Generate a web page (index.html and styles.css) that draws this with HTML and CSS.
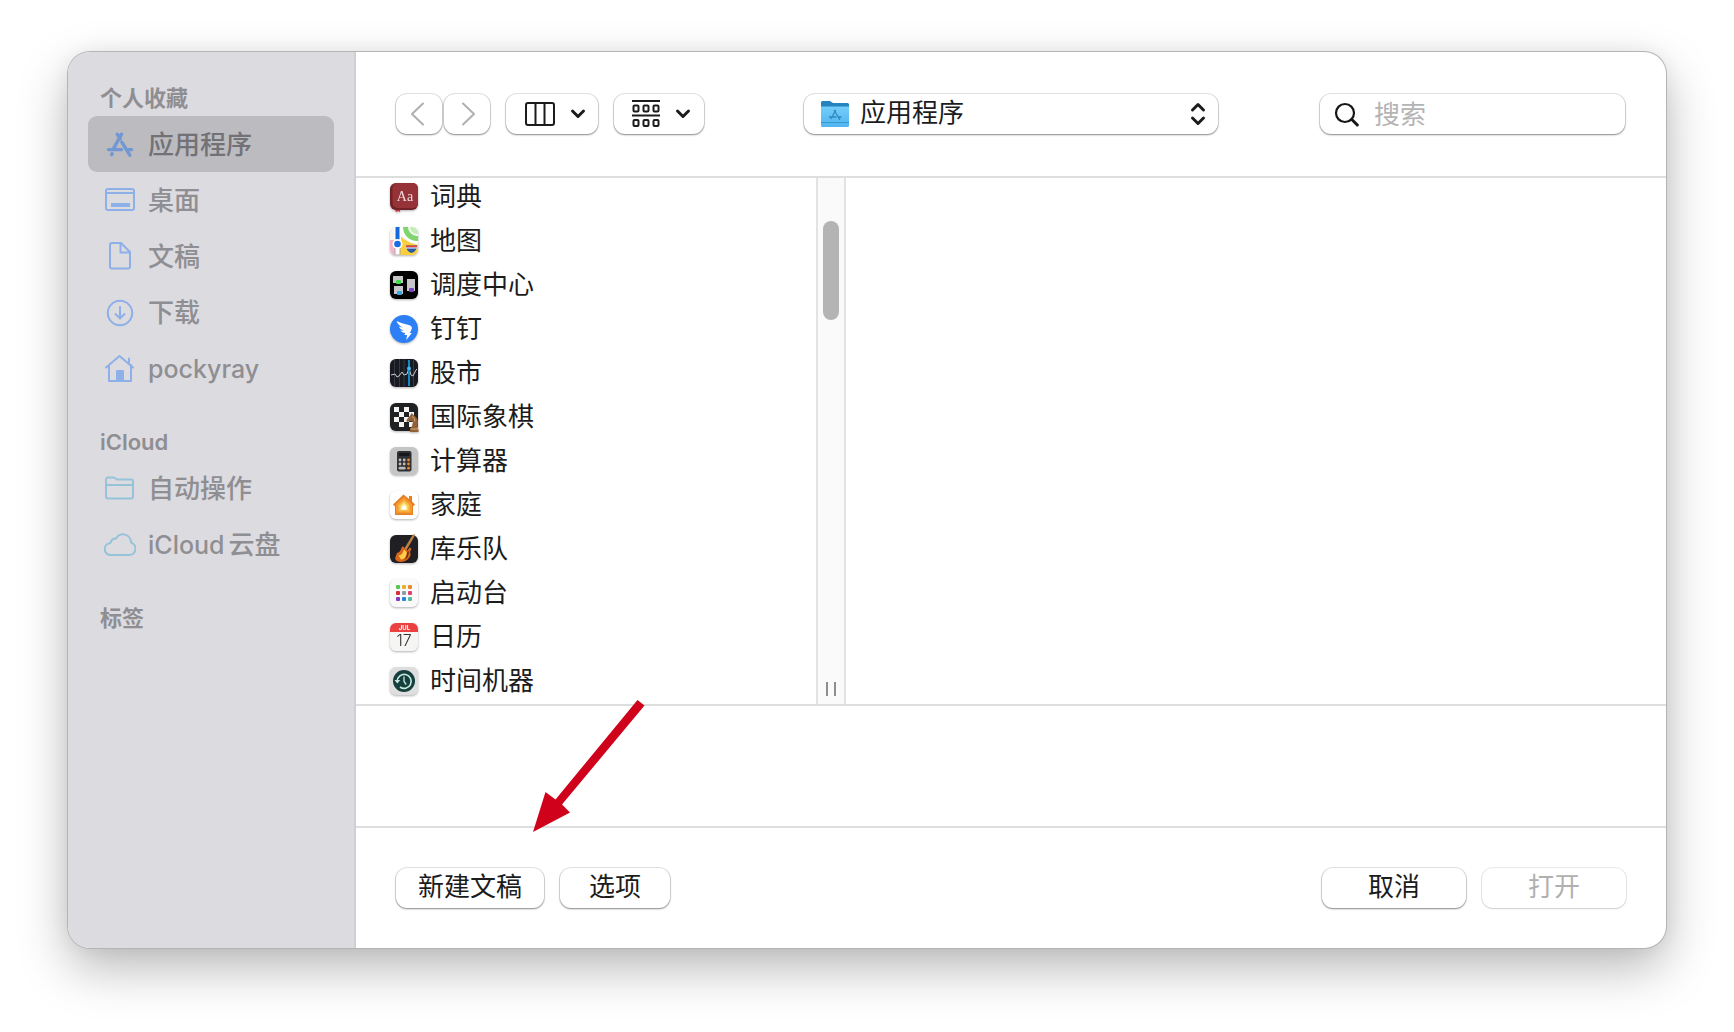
FILE: index.html
```html
<!DOCTYPE html>
<html lang="zh-CN">
<head>
<meta charset="utf-8">
<title>打开</title>
<link rel="stylesheet" href="styles.css">
</head>
<body>
<div class="dialog" role="dialog" aria-label="打开">
  <nav class="sidebar">
    <h2 class="side-heading">个人收藏</h2>
    <a class="side-item selected" href="#apps">
      <svg class="side-icon" viewBox="0 0 32 32" fill="none" stroke="currentColor" stroke-width="3.4" stroke-linecap="round"><path d="M17.6 6.2 9.6 20.3M13.3 6.2l3 4.6M17.8 14.2l8 13M4.5 21.6h13.2M23.6 21.6h4M7.6 26.6l.5-.9"/></svg>
      <span class="side-label">应用程序</span>
    </a>
    <a class="side-item" href="#desktop">
      <svg class="side-icon" viewBox="0 0 32 32" fill="none" stroke="currentColor" stroke-width="2"><rect x="2" y="5" width="28" height="21" rx="2"/><path d="M2 9h28"/><path d="M7 21h19" stroke-width="4"/></svg>
      <span class="side-label">桌面</span>
    </a>
    <a class="side-item" href="#documents">
      <svg class="side-icon" viewBox="0 0 32 32" fill="none" stroke="currentColor" stroke-width="2" stroke-linejoin="round"><path d="M8.500 3H17l9 9v14.500a2 2 0 0 1-2 2H8a2 2 0 0 1-2-2V5a2 2 0 0 1 2-2zM16.500 3v9.500H26"/></svg>
      <span class="side-label">文稿</span>
    </a>
    <a class="side-item" href="#downloads">
      <svg class="side-icon" viewBox="0 0 32 32" fill="none" stroke="currentColor" stroke-width="2" stroke-linecap="round" stroke-linejoin="round"><circle cx="16" cy="17" r="12.200"/><path d="M16 11v11M11.500 18l4.500 4.500 4.500-4.500"/></svg>
      <span class="side-label">下载</span>
    </a>
    <a class="side-item" href="#home">
      <svg class="side-icon" viewBox="0 0 32 32" fill="none" stroke="currentColor" stroke-width="2" stroke-linecap="round" stroke-linejoin="round"><path d="M2 15.500 15.500 4 29 15.500M5 13v16h22V13M25 11V6.500"/><rect x="13" y="19" width="6" height="10" fill="currentColor"/></svg>
      <span class="side-label latin">pockyray</span>
    </a>
    <h2 class="side-heading later">iCloud</h2>
    <a class="side-item cloud" href="#automator">
      <svg class="side-icon" viewBox="0 0 32 32" fill="none" stroke="currentColor" stroke-width="2" stroke-linejoin="round"><path d="M2 7.500a2 2 0 0 1 2-2h6l3 2h14a2 2 0 0 1 2 2v15a2 2 0 0 1-2 2H4a2 2 0 0 1-2-2zM2 13h27"/></svg>
      <span class="side-label">自动操作</span>
    </a>
    <a class="side-item cloud" href="#icloud-drive">
      <svg class="side-icon" viewBox="0 0 32 32" fill="none" stroke="currentColor" stroke-width="2" stroke-linejoin="round"><path d="M7 27a6 6 0 0 1-.5-12 5 5 0 0 1 5.500-4.500 8 8 0 0 1 15 4A6.400 6.400 0 0 1 25 27z"/></svg>
      <span class="side-label"><span class="latin">iCloud</span><span class="drive">云盘</span></span>
    </a>
    <h2 class="side-heading later">标签</h2>
  </nav>

  <main class="main">
    <header class="toolbar">
      <div class="tools">
        <div class="nav-pair">
          <button class="push nav-button" disabled aria-label="后退"><svg width="18" height="24" viewBox="0 0 18 24" fill="none" stroke="currentColor" stroke-width="2" stroke-linecap="round" stroke-linejoin="round"><path d="M13 1.500 2 12l11 10.500"/></svg></button>
          <button class="push nav-button" disabled aria-label="前进"><svg width="16" height="24" viewBox="0 0 16 24" fill="none" stroke="currentColor" stroke-width="2" stroke-linecap="round" stroke-linejoin="round"><path d="M4 1.500 15 12 4 22.500"/></svg></button>
        </div>
        <button class="push view-button" aria-label="分栏显示">
          <svg width="30" height="24" viewBox="0 0 30 24" fill="none" stroke="currentColor" stroke-width="2"><rect x="1" y="1" width="28" height="22" rx="2"/><path d="M10.500 1v22M19.500 1v22"/></svg>
          <svg width="16" height="12" viewBox="0 0 16 12" fill="none" stroke="currentColor" stroke-width="3" stroke-linecap="round" stroke-linejoin="round"><path d="m2.500 3 5.500 5.500L13.500 3"/></svg>
        </button>
        <button class="push view-button group-button" aria-label="分组方式">
          <svg width="28" height="30" viewBox="0 0 28 30" fill="none" stroke="currentColor" stroke-width="2"><path d="M0 2h28M0 16.500h28"/><rect x="1.500" y="6.500" width="5" height="6" rx="1"/><rect x="11.500" y="6.500" width="5" height="6" rx="1"/><rect x="21.500" y="6.500" width="5" height="6" rx="1"/><rect x="1.500" y="21" width="5" height="6" rx="1"/><rect x="11.500" y="21" width="5" height="6" rx="1"/><rect x="21.500" y="21" width="5" height="6" rx="1"/></svg>
          <svg width="16" height="12" viewBox="0 0 16 12" fill="none" stroke="currentColor" stroke-width="3" stroke-linecap="round" stroke-linejoin="round"><path d="m2.500 3 5.500 5.500L13.500 3"/></svg>
        </button>
      </div>
      <div class="push location">
        <svg width="30" height="28" viewBox="0 0 30 28"><defs><linearGradient id="folder" x1="0" y1="0" x2="0" y2="1"><stop offset="0" stop-color="#73cdfa"/><stop offset="1" stop-color="#50b4ee"/></linearGradient></defs><path d="M1 2.500A1.500 1.500 0 0 1 2.500 1H10l3 2h14.500A1.500 1.500 0 0 1 29 4.500V14H1z" fill="#2583be"/><path d="M1 6.500h28v19a1.500 1.500 0 0 1-1.500 1.500h-25A1.500 1.500 0 0 1 1 25.500z" fill="url(#folder)"/><path d="M1 22.500h28" stroke="#3797cf"/><path d="m15.800 10-5 9M14 10l6 10M9 17h7.500M18.500 17h3" stroke="#3189bf" stroke-width="1.300" fill="none"/></svg>
        <select class="location-select" aria-label="位置"><option>应用程序</option></select>
        <svg width="16" height="24" viewBox="0 0 16 24" fill="none" stroke="currentColor" stroke-width="3" stroke-linecap="round" stroke-linejoin="round"><path d="M2.500 8 8 2.500 13.500 8M2.500 16 8 21.500 13.500 16"/></svg>
      </div>
      <label class="push search">
        <svg width="26" height="26" viewBox="0 0 26 26" fill="none" stroke="#161616" stroke-linecap="round"><circle cx="11" cy="12" r="9" stroke-width="2.200"/><path d="m17.800 18.500 5.500 5.500" stroke-width="3"/></svg>
        <input class="search-input" type="search" placeholder="搜索" aria-label="搜索">
      </label>
    </header>

    <section class="browser">
      <ul class="files">
        <li class="file"><svg class="app" viewBox="0 0 28 28"><path d="M4 24h6v5l-2-1-2 1z" fill="#d0303a"/><rect x="0" y="0" width="28" height="27" rx="6" fill="#732327"/><rect x="2.500" y="0" width="25.500" height="25" rx="5" fill="#963338"/><text x="15" y="18" text-anchor="middle" class="dict-text">Aa</text></svg>词典</li>
        <li class="file"><svg class="app" viewBox="0 0 28 28"><clipPath id="tile"><rect width="28" height="28" rx="6"/></clipPath><g clip-path="url(#tile)"><path fill="#f7f6ef" d="M0 0h28v28H0z"/><path fill="#f3b6c8" d="M0 13h5v15H0z"/><path d="M10 9q8 7 18 9v10H10z" fill="#f9cf3a"/><circle cx="27" cy="0" r="15" fill="none" stroke="#fff" stroke-width="3"/><circle cx="27" cy="0" r="11.500" fill="none" stroke="#7fd56e" stroke-width="5"/><circle cx="27" cy="0" r="7" fill="#c3edb5"/><path d="M4 0h7v14H4z" fill="#fff"/><path d="M5.500 0h4v14h-4z" fill="#1469dc"/><path d="M5 20h5v8H5z" fill="#fff" stroke="#aaa"/><circle cx="7.500" cy="17" r="5" fill="#fff"/><circle cx="7.500" cy="17" r="3.300" fill="#176ee2"/><path d="M16 18.500h11q0 6-5.500 7.500Q16 24.500 16 18.500z" fill="#275aa9"/><path d="M16 18.500h11v2H16z" fill="#e24841"/><path d="M16 20.500h11v1H16z" fill="#fff"/></g></svg>地图</li>
        <li class="file"><svg class="app" viewBox="0 0 28 28"><rect width="28" height="28" rx="6"/><path fill="#c6c5c8" d="M3 5h10v7H3zM4 15h9v8H4zM17 8h8v12h-8z"/><rect x="6" y="9" width="5" height="4" rx="1" fill="#43dc49"/><rect x="7" y="20" width="5" height="4" rx="1" fill="#32a9e6"/><rect x="19" y="17" width="5" height="4" rx="1" fill="#7744c1"/></svg>调度中心</li>
        <li class="file"><svg class="app" viewBox="0 0 28 28"><circle cx="14" cy="14" r="14" fill="#2d7ff5"/><path d="M6.500 6q5 2.500 12 4 4 1 3.300 3.500-.800 2.500-2 4.500h2l-5.500 7 .800-5h-2.800l1-2q-3.500-.200-5-2.500l3.500.3q-4-1.500-5-4.300l4 1.200Q8 10 6.500 6z" fill="#fff"/></svg>钉钉</li>
        <li class="file"><svg class="app" viewBox="0 0 28 28"><rect width="28" height="28" rx="6" fill="#171a20"/><path d="M4.500 1v26M9.500 0v28M14 0v28M23.500 0v28" stroke="#363941"/><path d="m1 16 4-1 2 3 2-1 3-4 2 3 3-1 2-6 2 7 2 1 3-6 1-1" fill="none" stroke="#c8cbd0"/><path d="M19 1v26" stroke="#1486c5" stroke-width="2"/><circle cx="19" cy="9.500" r="2" fill="#42b7f3"/></svg>股市</li>
        <li class="file"><svg class="app" viewBox="0 0 28 28"><rect width="28" height="28" rx="6" fill="#202123"/><path fill="#f3f3f3" d="M4 4h20v20H4z"/><path fill="#202123" d="M9 4h5v5H9zM19 4h5v5h-5zM4 9h5v5H4zM14 9h5v5h-5zM9 14h5v5H9zM19 14h5v5h-5zM4 19h5v5H4zM14 19h5v5h-5z"/><path d="M20 29v-3l2-3 1-4-2-1-4 1-.500-2 4-5 1-2 2 2q5 3 4.500 9l-1 3 1.500 3v2z" fill="#916239"/><path d="M20.500 26h8.500M22 13.500q3 1 3 5" stroke="#d9aa71" fill="none"/></svg>国际象棋</li>
        <li class="file"><svg class="app" viewBox="0 0 28 28"><rect width="28" height="28" rx="6" fill="#c5c5c5"/><rect x="7" y="4" width="14.500" height="20.500" rx="2" fill="#303134"/><path d="M9 6h10.500v3H9z" fill="#17181b"/><g fill="#bbb"><circle cx="10" cy="13" r="1.400"/><circle cx="14.200" cy="13" r="1.400"/><circle cx="10" cy="17" r="1.400"/><circle cx="14.200" cy="17" r="1.400"/><rect x="8.600" y="19.800" width="7" height="2.800" rx="1.400"/></g><g fill="#f08422"><circle cx="18.500" cy="13" r="1.400"/><circle cx="18.500" cy="17" r="1.400"/><circle cx="18.500" cy="21.200" r="1.400"/></g></svg>计算器</li>
        <li class="file"><svg class="app" viewBox="0 0 28 28"><rect width="28" height="28" rx="6" fill="#fff"/><path d="M13.500 3.500 19 8V5h3v5.500l3 3-1.500 1.500H23v9H5v-9h-.700L3 13.500z" fill="#e57f1f"/><path d="m14 6 8 7v9.500H6V13z" fill="#f49a31"/><path d="m14 9 5.500 5v6.500h-11V14z" fill="#f9bf4a"/><path d="m14 11.500 3.500 3.500V19h-7v-4z" fill="#ffe98f"/><path d="m14 14 2 2v2.500h-4V16z" fill="#fff"/></svg>家庭</li>
        <li class="file"><svg class="app" viewBox="0 0 28 28"><rect width="28" height="28" rx="6" fill="#202024"/><path d="m22 1 2-2 1 1-1.500 3L16 16l-2-2z" fill="#b98146"/><path d="M7 18q3-1 4-3.500l1-3 2 .500 1 2.500 2.500 1 2-3 2 1-1.500 3.500q1.500 3-1 6-3 4-9 4-4-.500-5-3.500z" fill="#d9661c"/><path d="M8.500 20.500q4 0 5.500-6l3 3q-1 6.500-6 7z" fill="#ffcf45"/><path d="M17 17l2-1q0 7-5 9 3-3 3-8z" fill="#7c2b14"/></svg>库乐队</li>
        <li class="file"><svg class="app" viewBox="0 0 28 28"><rect width="28" height="28" rx="6" fill="#fafafa"/><rect x="6" y="6" width="4" height="4" rx="1" fill="#55c94e"/><rect x="12" y="6" width="4" height="4" rx="1" fill="#e7b12f"/><rect x="18" y="6" width="4" height="4" rx="1" fill="#e98b2d"/><rect x="6" y="12" width="4" height="4" rx="1" fill="#d72e3a"/><rect x="12" y="12" width="4" height="4" rx="1" fill="#919caa"/><rect x="18" y="12" width="4" height="4" rx="1" fill="#e0416e"/><rect x="6" y="18" width="4" height="4" rx="1" fill="#8539be"/><rect x="12" y="18" width="4" height="4" rx="1" fill="#2584dd"/><rect x="18" y="18" width="4" height="4" rx="1" fill="#50bf9f"/></svg>启动台</li>
        <li class="file"><svg class="app" viewBox="0 0 28 28"><rect width="28" height="28" rx="6" fill="#f5f5f4"/><path d="M0 9V6a6 6 0 0 1 6-6h16a6 6 0 0 1 6 6v3z" fill="#eb4141"/><text x="14.500" y="7" text-anchor="middle" class="cal-month">JUL</text><text x="14" y="23" text-anchor="middle" class="cal-day">17</text></svg>日历</li>
        <li class="file"><svg class="app" viewBox="0 0 28 28"><rect width="28" height="28" rx="6" fill="#dedede"/><circle cx="14" cy="14" r="11" fill="#153f3c"/><path d="M7.200 14.200A7 7 0 1 1 10 20" fill="none" stroke="#c6e9dc" stroke-width="1.600"/><path d="m4.500 13 2.800 3.500 3-3.500z" fill="#c6e9dc"/><path d="M14 9.500v5l2.200 3" fill="none" stroke="#c6e9dc" stroke-width="1.300"/></svg>时间机器</li>
      </ul>
      <div class="scrollbar"><div class="thumb"></div><div class="grip"></div></div>
      <div class="next-column"></div>
    </section>

    <section class="accessory"></section>

    <footer class="actions">
      <button class="push new-doc">新建文稿</button>
      <button class="push options">选项</button>
      <button class="push answer cancel">取消</button>
      <button class="push answer" disabled>打开</button>
    </footer>
  </main>

  <svg class="arrow" width="112" height="133" viewBox="0 0 112 133" aria-hidden="true"><path d="M0 132 12.500 92l10 7.500L104.500 0l7 5.500L29 104.500 37 112.500z" fill="#d0021b"/></svg>
</div>
</body>
</html>
```
FILE: styles.css
```css
* {
  box-sizing: border-box;
}

body {
  margin: 0;
  height: 100vh;
  padding: 52px 68px 84px;
  display: flex;
  background: #fff;
  color: #1c1c1c;
  font: 26px/36px Inter, "Noto Sans CJK SC", sans-serif;
}

button,
input,
select {
  font: inherit;
  color: inherit;
}

.dialog {
  position: relative;
  flex: 1;
  display: flex;
  border-radius: 22px;
  background: #fff;
  box-shadow: 0 0 0 1px #b4b4b4, 0 20px 50px rgba(0, 0, 0, 0.28), 0 0 20px rgba(0, 0, 0, 0.06);
}

.sidebar {
  width: 288px;
  padding: 28px 20px;
  border-right: 2px solid #d0cfd3;
  border-radius: 22px 0 0 22px;
  background: #dcdbe0;
  color: #8f8e92;
}

.side-heading {
  margin: 0;
  padding-left: 12px;
  font-size: 22px;
  line-height: 36px;
  font-weight: 600;
}

.side-heading.later {
  margin-top: 28px;
}

.side-item {
  display: flex;
  align-items: center;
  gap: 12px;
  height: 56px;
  padding-left: 16px;
  border-radius: 9px;
  color: inherit;
  text-decoration: none;
  font-weight: 500;
}

.side-item.selected {
  background: #bcbbc0;
  color: #727276;
}

.side-label {
  padding-top: 2px;
}

.latin {
  font-size: 25px;
}

.side-icon {
  width: 32px;
  height: 32px;
  color: #8db0e8;
}

.selected .side-icon {
  color: #7198d2;
}

.cloud .side-icon {
  color: #97c3da;
}

.drive {
  margin-left: 4px;
}

.main {
  flex: 1;
  min-width: 0;
  display: flex;
  flex-direction: column;
}

.toolbar {
  height: 126px;
  padding: 0 40px;
  display: grid;
  grid-template-columns: 1fr 414px 1fr;
  align-items: center;
  border-bottom: 2px solid #dedede;
}

.tools {
  display: flex;
  gap: 16px;
}

.nav-pair {
  display: flex;
  gap: 2px;
}

.push {
  height: 40px;
  padding: 0;
  display: flex;
  align-items: center;
  justify-content: center;
  border: 0;
  border-radius: 11px;
  background: #fff;
  box-shadow: 0 0 0 1px rgba(0, 0, 0, 0.1), 0 1px 2px rgba(0, 0, 0, 0.4);
}

.push:disabled {
  color: #b0b0b0;
}

.nav-button {
  width: 46px;
}

.view-button {
  width: 92px;
  gap: 15px;
  padding-left: 6px;
}

.group-button {
  width: 90px;
  padding-left: 4px;
}

.location {
  padding: 0 12px 0 16px;
}

.location-select {
  flex: 1;
  height: 40px;
  margin: 0 10px;
  padding: 0 0 3px;
  border: 0;
  appearance: none;
  background: transparent;
}

.search {
  justify-self: end;
  width: 305px;
  margin-right: 1px;
  padding: 0 14px;
  gap: 14px;
}

.search-input {
  flex: 1;
  min-width: 0;
  padding: 2px 0 0;
  border: 0;
  background: transparent;
}

.search-input::placeholder {
  color: #b4b4b4;
}

.browser {
  flex: 1;
  display: flex;
  min-height: 0;
}

.files {
  width: 460px;
  margin: 0;
  padding: 0 0 1px 34px;
  list-style: none;
  display: flex;
  flex-direction: column;
  justify-content: flex-end;
  overflow: hidden;
}

.file {
  flex: none;
  height: 44px;
  display: flex;
  align-items: center;
  gap: 12px;
}

.app {
  width: 28px;
  height: 28px;
  overflow: visible;
  filter: drop-shadow(0 1px 1px rgba(0, 0, 0, 0.3));
}

.dict-text {
  font: 14px "Liberation Serif", serif;
  fill: #f4dcdc;
}

.cal-month {
  font: bold 6px Inter, sans-serif;
  fill: #fff;
}

.cal-day {
  font: 300 16px Inter, sans-serif;
  fill: #333;
}

.scrollbar {
  width: 30px;
  padding: 43px 0 8px;
  display: flex;
  flex-direction: column;
  align-items: center;
  justify-content: space-between;
  border: solid #e3e3e3;
  border-width: 0 2px;
  background: #fafafa;
}

.thumb {
  width: 16px;
  height: 99px;
  border-radius: 8px;
  background: #b4b4b4;
}

.grip {
  width: 10px;
  height: 14px;
  border: solid #8e8e8e;
  border-width: 0 2px;
}

.next-column {
  flex: 1;
}

.accessory {
  height: 124px;
  border: solid #dedede;
  border-width: 2px 0;
}

.actions {
  height: 120px;
  padding: 0 40px;
  display: flex;
  align-items: center;
  gap: 16px;
}

.actions .push {
  padding-bottom: 3px;
}

.new-doc {
  width: 148px;
}

.options {
  width: 110px;
}

.answer {
  width: 144px;
}

.answer:disabled {
  box-shadow: 0 0 0 1px rgba(0, 0, 0, 0.08), 0 1px 2px rgba(0, 0, 0, 0.12);
}

.cancel {
  margin-left: auto;
}

.arrow {
  position: absolute;
  left: 465px;
  top: 648px;
}
```
